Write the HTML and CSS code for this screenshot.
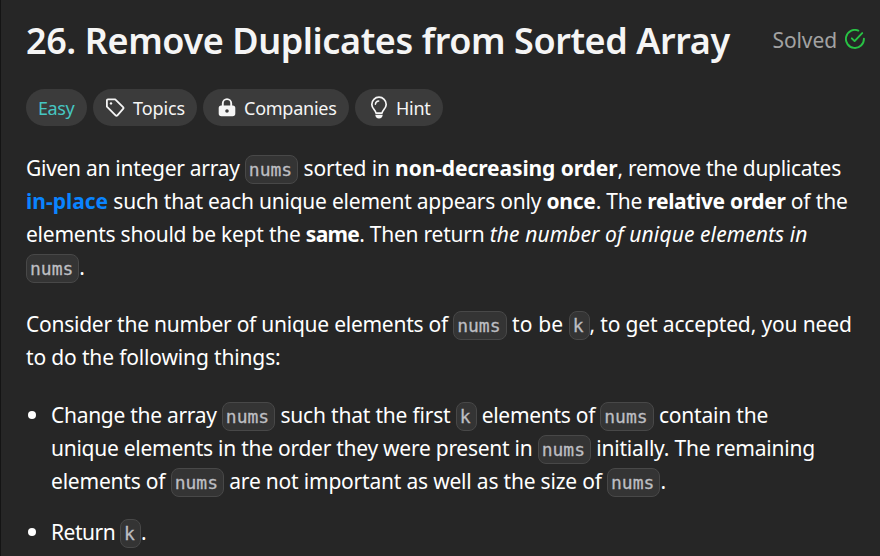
FILE: index.html
```html
<!DOCTYPE html>
<html lang="en">
<head>
<meta charset="utf-8">
<title>26. Remove Duplicates from Sorted Array</title>
<link rel="stylesheet" href="styles.css">
</head>
<body>
<main class="panel">
  <header class="heading">
    <h1>26. Remove Duplicates from Sorted Array</h1>
    <div class="solved"><span>Solved</span>
      <svg width="20" height="20" viewBox="0 0 20 20" fill="none" stroke="#28c244" stroke-width="1.9" stroke-linecap="round" stroke-linejoin="round"><path d="M13.3 1.6A9 9 0 1 0 18.9 9.6"/><path d="M6.8 9.3l2.8 2.8 7.6-8"/></svg>
    </div>
  </header>
  <div class="tags">
    <span class="tag easy">Easy</span>
    <span class="tag topics"><svg width="20" height="20" viewBox="0 0 20 20" fill="none" stroke="#f5f5f5" stroke-width="1.8" stroke-linejoin="round"><path d="M1.9 2.3Q1.9 1.3 2.9 1.3H10.2L18.1 9.2Q18.9 10 18.1 10.8L12.4 17.3Q11.5 18.2 10.6 17.3L1.9 8.7Z"/><circle cx="6" cy="5.4" r="1.2" fill="#f5f5f5" stroke="none"/></svg><span>Topics</span></span>
    <span class="tag companies"><svg width="18" height="20" viewBox="0 0 18 20"><path d="M4.8 8V5.3a4.2 4.2 0 0 1 8.4 0V8" fill="none" stroke="#f5f5f5" stroke-width="1.9"/><path fill="#f5f5f5" fill-rule="evenodd" d="M3.2 7.6h11.6a2.5 2.5 0 0 1 2.5 2.5v5.5a2.7 2.7 0 0 1-2.7 2.7H3.4a2.7 2.7 0 0 1-2.7-2.7v-5.5a2.5 2.5 0 0 1 2.5-2.5ZM9 11.2a1.8 1.8 0 1 0 0 3.6 1.8 1.8 0 0 0 0-3.6Z"/></svg><span>Companies</span></span>
    <span class="tag hint"><svg width="18" height="24" viewBox="0 0 18 24" fill="none" stroke="#f5f5f5" stroke-width="1.7" stroke-linecap="round"><path d="M6 17.2C5.6 14 1.8 12.5 1.8 8.4a7.2 7.2 0 0 1 14.4 0c0 4.1-3.8 5.6-4.2 8.8Z" stroke-linejoin="round"/><path d="M5.4 8.3A3.6 3.6 0 0 1 8.7 5" stroke-width="1.5"/><path d="M5.3 18.8h7.4c0 2.2-1.5 3.7-3.7 3.7s-3.7-1.5-3.7-3.7Z" fill="#f5f5f5" stroke="none"/></svg><span>Hint</span></span>
  </div>
  <div class="content">
    <p><span class="line l1">Given an integer array <code>nums</code><span class="even"> sorted in </span><b>non-decreasing order</b>, remove the duplicates</span>
    <span class="line l2"><a>in-place</a> such that each unique element appears only <b>once</b>. The <b class="tight">relative order</b><span class="even"> of the</span></span>
    <span class="line l3">elements should be kept the <b>same</b>. Then return <em>the number of unique elements in</em></span>
    <span class="line l4"><code>nums</code>.</span></p>
    <p><span class="line l5">Consider the number of unique elements of <code>nums</code><span class="loose"> to be </span><code>k</code><span class="even">, to get accepted, you need</span></span>
    <span class="line l6">to do the following things:</span></p>
    <ul>
      <li><span class="line l7">Change the array <code>nums</code><span class="l9"> such that the first </span><code>k</code><span class="l7"> elements of </span><code>nums</code><span class="l9"> contain the</span></span>
      <span class="line l8">unique elements in the order they were present in <code>nums</code><span class="l9"> initially. The remaining</span></span>
      <span class="line l9">elements of <code>nums</code> are not important as well as the size of <code>nums</code>.</span></li>
      <li><span class="line l10">Return <code>k</code>.</span></li>
    </ul>
  </div>
</main>
</body>
</html>
```
FILE: styles.css
```css
* { box-sizing: border-box; }
body {
  margin: 0;
  background: #262626;
  color: #fff;
  font-family: "Noto Sans", "Open Sans", sans-serif;
  overflow: hidden;
}
.panel {
  height: 556px;
  overflow: hidden;
  border-left: 1px solid #141414;
  padding: 16px 15px 0 25px;
}
.heading { display: flex; justify-content: space-between; height: 50px; align-items: center; }
h1 { margin: 0; font-size: 36px; line-height: 50px; font-weight: 600; color: #f5f5f5; letter-spacing: -0.42px; white-space: nowrap; }
.solved { display: flex; align-items: center; gap: 8px; font-size: 21px; line-height: 30px; color: #a2a2a2; margin-top: -2px; }
.solved span { letter-spacing: -0.1px; }
.solved svg { margin-top: -2px; }
.tags { display: flex; gap: 6px; margin-top: 23px; }
.tag {
  display: flex;
  align-items: center;
  height: 37px;
  border-radius: 19px;
  background: #3b3b3b;
  color: #f5f5f5;
  font-size: 18px;
  padding-left: 12px;
  white-space: nowrap;
  letter-spacing: -0.25px;
}
.tag svg { flex: none; }
.easy { width: 61px; color: #46c6c2; letter-spacing: -0.45px; }
.topics { width: 104px; letter-spacing: -0.1px; }
.topics svg { margin-right: 8px; }
.companies { width: 146px; padding-left: 15px; }
.companies svg { margin-right: 8px; }
.hint { width: 88px; padding-left: 15px; }
.hint svg { margin-right: 8px; }
.content { margin-top: 26px; font-size: 21px; line-height: 33px; }
.line { display: block; height: 33px; white-space: nowrap; }
.l1 { letter-spacing: -0.28px; }
.l2 { letter-spacing: -0.23px; }
.l3 { letter-spacing: -0.23px; }
.l5 { letter-spacing: -0.25px; }
.l6 { letter-spacing: -0.15px; }
.l7 { letter-spacing: -0.29px; }
.l8 { letter-spacing: -0.26px; }
.l9 { letter-spacing: -0.2px; }
.l10 { letter-spacing: -0.5px; }
.even { letter-spacing: -0.15px; }
.loose { letter-spacing: 0.1px; }
p { margin: 0 0 24px; }
p + p { margin-bottom: 25px; }
b, a { font-weight: 700; }
a { color: #0a84ff; letter-spacing: 0; }
.l1 b { letter-spacing: -0.1px; }
.l2 .tight { letter-spacing: -0.35px; }
.l3 b { letter-spacing: -0.7px; }
em { letter-spacing: 0.1px; }
code {
  display: inline-block;
  height: 29px;
  line-height: 27px;
  padding: 0 5px 0 3px;
  border: 1px solid #484848;
  border-radius: 8px;
  background: #343434;
  color: #bdbec2;
  font-family: "DejaVu Sans Mono", monospace;
  font-size: 18px;
  letter-spacing: 0;
  -webkit-text-stroke: 0.3px #bdbec2;
}
ul { margin: 0; padding: 0 0 0 25px; list-style: none; }
li { margin-bottom: 18px; position: relative; }
li::before { content: ""; position: absolute; left: -23px; top: 12px; width: 8px; height: 8px; border-radius: 50%; background: #fff; }
```
